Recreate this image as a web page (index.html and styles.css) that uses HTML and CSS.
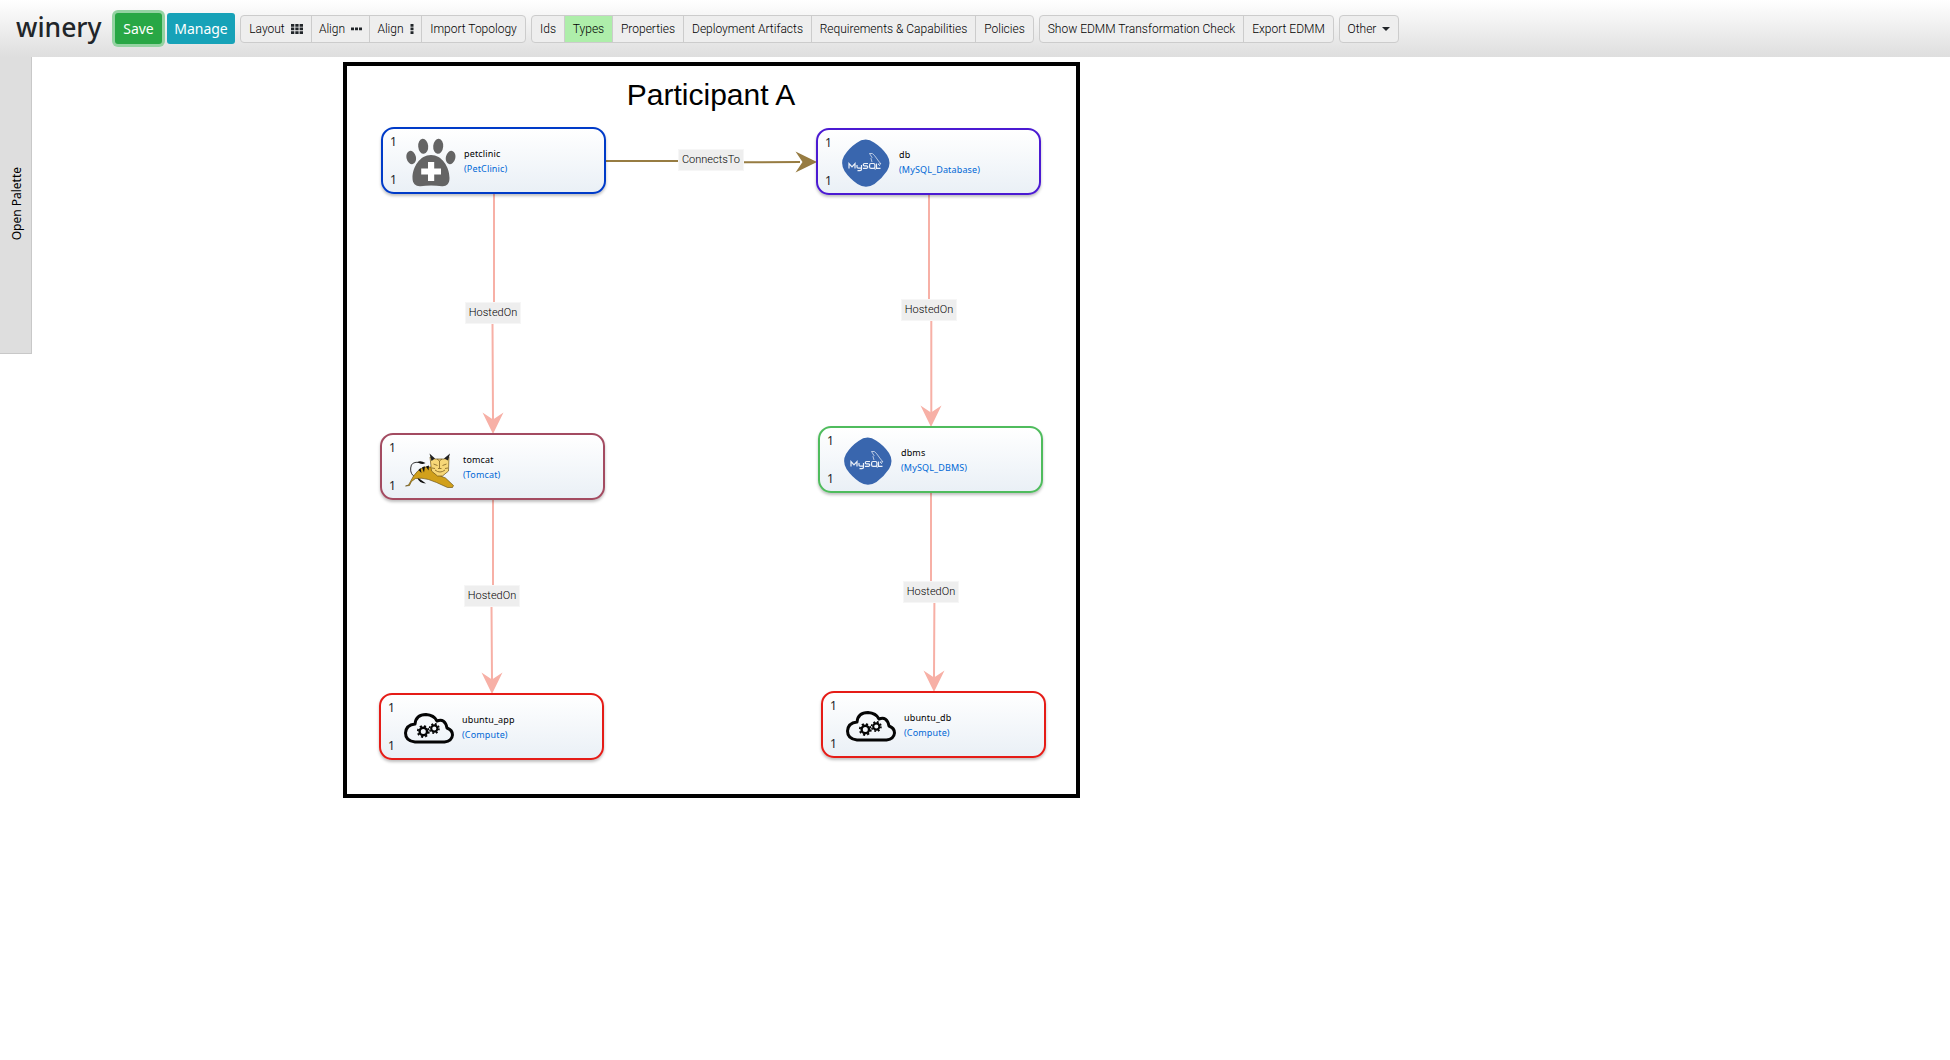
FILE: index.html
```html
<!DOCTYPE html>
<html lang="en">
<head>
<meta charset="utf-8">
<title>winery</title>
<link rel="stylesheet" href="styles.css">
</head>
<body>
<svg class="defs" width="0" height="0">
  <defs>
    <symbol id="paw" viewBox="0 0 50 50">
      <g fill="#646464">
        <ellipse cx="5.200" cy="20.500" rx="4.700" ry="6.800" transform="rotate(-14 5.2 20.5)"/>
        <ellipse cx="17.200" cy="9.300" rx="5" ry="7.500" transform="rotate(-5 17.2 9.3)"/>
        <ellipse cx="32.200" cy="9.300" rx="5" ry="7.500" transform="rotate(5 32.2 9.3)"/>
        <ellipse cx="44.600" cy="20.500" rx="4.700" ry="6.800" transform="rotate(14 44.6 20.5)"/>
        <path d="M25 18C36 18 43.500 30 43.500 41C43.500 47 40.500 49.500 36 49.200C29 48.200 21 48.200 14.500 49.200C10 49.500 6.500 47 6.500 41C6.500 30 14 18 25 18Z"/>
      </g>
      <path fill="#fff" d="M22 25h6.200v6.500H35v6h-6.800V44H22v-6.500h-6.800v-6H22z"/>
    </symbol>
    <symbol id="mysql" viewBox="0 0 50 50">
      <path fill="#3966ae" d="M15.500 5Q24.500-1.500 33 4.500Q41 9.500 46 17Q51 25 46 33Q41 40.500 33.500 46Q25 51.500 16.500 46Q8.500 40.500 3.500 33Q-1 25.500 3 18Q8 10 15.500 5Z"/>
      <g fill="none" stroke="#eef2f9" stroke-width="1.200">
        <path d="M8 30.500v-5l3 3.400L14 25.500v5M16 27v2q0 1.200 1.300 1.200H20M20.500 27v4.300q0 1.300-1.500 1.300h-2.500M27 25.500h-3.500q-1.200 0-1.200 1.200t1.200 1.200h2q1.300 0 1.300 1.200t-1.300 1.300H22M30 25.500h2.500q1.400 0 1.400 1.400v2q0 1.400-1.400 1.400H30q-1.400 0-1.400-1.400v-2q0-1.400 1.400-1.400M33 29.500l1.500 2M35.500 25.500v4.900h4"/>
        <path stroke-width=".7" d="M31 24l-1-3.500 1-1-2.500-4q3-1 5 2l4 5.500 2.500 3h-3l2 2"/>
      </g>
    </symbol>
    <symbol id="tomcat" viewBox="0 0 50 36">
      <path d="M15 9.500Q6 8 5.700 15Q5 21 10 24" fill="none" stroke="#333" stroke-width="1"/>
      <path d="M12.500 9q3-2 8 1-4 2.500-8-1M12 24l9 6.500q-7 0-9-6.500" fill="#111"/>
      <path fill="#d1a01b" stroke="#5b450c" stroke-width=".6" d="M.5 33l3-1 5-9q4-6 10-9h9l8 9 5 2 8 7.500-1 2h-5l-11-5-8-3q-7-2-13-1l-4 3-2 4z"/>
      <path fill="#111" d="M17 14.500l2 5 1-6zM21 13.500l2.500 4 .5-5zM13.500 17l3 3-1-5z"/>
      <path fill="#f7d777" stroke="#6b5217" stroke-width=".7" d="M25 4l5 2h9l5-2-.5 14-6 5h-5l-6-5z"/>
      <path fill="#222" d="M24.500.5l5.500 5-3.500 2.500zM45 .5L39 5.500l4 2z"/>
      <path d="M28.500 11l4 1.500M41.500 11l-4 1.500M34.500 8v7M33 15.500h3.500M30 17q5 4 10 0M27 15l3 .5M43 15l-3 .5M32 6l2.500 2 2.500-2" fill="none" stroke="#7c5f23" stroke-width=".8"/>
    </symbol>
    <symbol id="cloud" viewBox="0 0 50 31">
      <path fill="none" stroke="#050505" stroke-width="3" stroke-linejoin="round" d="M11 29Q1.500 28 1.500 20Q2 12 11 11Q12 1.500 22 1.500Q30 2 33 8Q41 5 43 15Q48.500 17 48.500 22Q48 28 40.500 29Z"/>
      <g fill="none" stroke="#050505">
        <circle cx="19.300" cy="18.500" r="3.700" stroke-width="2.400"/>
        <circle cx="19.300" cy="18.500" r="5.500" stroke-width="1.800" stroke-dasharray="2.160"/>
        <circle cx="30.300" cy="15.500" r="3.100" stroke-width="2.100"/>
        <circle cx="30.300" cy="15.500" r="4.700" stroke-width="1.600" stroke-dasharray="1.850"/>
      </g>
    </symbol>
  </defs>
</svg>

<header class="toolbar">
  <span class="brand">winery</span>
  <button class="btn save">Save</button>
  <button class="btn manage">Manage</button>
  <div class="group actions">
    <button class="w71">Layout
      <svg width="12" height="10" viewBox="0 0 12 10"><path fill="#212529" d="M0 0h3.300v2.700H0zM4.300 0h3.300v2.700H4.300zM8.600 0H12v2.700H8.600zM0 3.600h3.300v2.700H0zM4.300 3.600h3.300v2.700H4.300zM8.600 3.600H12v2.700H8.600zM0 7.200h3.300v2.700H0zM4.300 7.200h3.300v2.700H4.300zM8.600 7.200H12v2.700H8.600z"/></svg>
    </button>
    <button class="w58">Align
      <svg width="11" height="10" viewBox="0 0 11 10"><path fill="#212529" d="M0 3.500h3v2.800H0zM4 3.500h3v2.800H4zM8 3.500h3v2.800H8z"/></svg>
    </button>
    <button class="w52">Align
      <svg width="4" height="10" viewBox="0 0 4 10"><path fill="#212529" d="M.5 0h3v2.700h-3zM.5 3.600h3v2.700h-3zM.5 7.200h3v2.700h-3z"/></svg>
    </button>
    <button class="w103">Import Topology</button>
  </div>
  <div class="group views">
    <button class="w33">Ids</button>
    <button class="w48 active">Types</button>
    <button class="w71">Properties</button>
    <button class="w128">Deployment Artifacts</button>
    <button class="w164">Requirements &amp; Capabilities</button>
    <button class="w57">Policies</button>
  </div>
  <div class="group edmm">
    <button class="w204">Show EDMM Transformation Check</button>
    <button class="w89">Export EDMM</button>
  </div>
  <div class="group other">
    <button class="w58">Other <span class="caret"></span></button>
  </div>
</header>

<main class="workspace">
  <aside class="palette"><span>Open Palette</span></aside>
  <div class="canvas">
    <section class="participant"><h1>Participant A</h1></section>
    <svg class="links" width="1950" height="1003" viewBox="0 57 1950 1003">
      <g fill="none" stroke="#f7b0a6" stroke-width="2">
        <path d="M494 194V303M492.500 323L493 420M493 500V586M491.500 605L492 680M929 195V300M931.300 320V414M931 493V582M934.400 602L934 678"/>
      </g>
      <path d="M606 161H680M742 162.300L800 162" stroke="#977c42" stroke-width="2"/>
      <path fill="#977c42" d="M817 162l-21.500-10.500 7 10.500-7 10.500z"/>
      <g fill="#f7b0a6">
        <path d="M493 434l-10.500-21.500 10.500 7 10.500-7z"/>
        <path d="M931 427l-10.500-21.500 10.500 7 10.500-7z"/>
        <path d="M492 694l-10.500-21.500 10.500 7 10.500-7z"/>
        <path d="M934 692l-10.500-21.500 10.500 7 10.500-7z"/>
      </g>
    </svg>
    <span class="link-label connects">ConnectsTo</span>
    <span class="link-label host-a1">HostedOn</span>
    <span class="link-label host-b1">HostedOn</span>
    <span class="link-label host-a2">HostedOn</span>
    <span class="link-label host-b2">HostedOn</span>

    <article class="node petclinic">
      <div class="counts"><span>1</span><span>1</span></div>
      <svg class="logo" width="50" height="50"><use href="#paw"/></svg>
      <div class="names"><span>petclinic</span><span class="type">(PetClinic)</span></div>
    </article>
    <article class="node db">
      <div class="counts"><span>1</span><span>1</span></div>
      <svg class="logo" width="50" height="50"><use href="#mysql"/></svg>
      <div class="names"><span>db</span><span class="type">(MySQL_Database)</span></div>
    </article>
    <article class="node tomcat">
      <div class="counts"><span>1</span><span>1</span></div>
      <svg class="logo cat" width="50" height="36"><use href="#tomcat"/></svg>
      <div class="names"><span>tomcat</span><span class="type">(Tomcat)</span></div>
    </article>
    <article class="node dbms">
      <div class="counts"><span>1</span><span>1</span></div>
      <svg class="logo" width="50" height="50"><use href="#mysql"/></svg>
      <div class="names"><span>dbms</span><span class="type">(MySQL_DBMS)</span></div>
    </article>
    <article class="node ubuntu-app">
      <div class="counts"><span>1</span><span>1</span></div>
      <svg class="logo" width="50" height="31"><use href="#cloud"/></svg>
      <div class="names"><span>ubuntu_app</span><span class="type">(Compute)</span></div>
    </article>
    <article class="node ubuntu-db">
      <div class="counts"><span>1</span><span>1</span></div>
      <svg class="logo" width="50" height="31"><use href="#cloud"/></svg>
      <div class="names"><span>ubuntu_db</span><span class="type">(Compute)</span></div>
    </article>
  </div>
</main>
</body>
</html>
```
FILE: styles.css
```css
* { box-sizing: border-box; }
body {
  margin: 0;
  height: 1060px;
  overflow: hidden;
  background: #fff;
  color: #212529;
  font-family: "Noto Sans", sans-serif;
}
.defs { position: absolute; }
button { font-family: inherit; color: inherit; margin: 0; }

.toolbar {
  height: 57px;
  display: flex;
  align-items: center;
  padding: 0 0 0 16px;
  background: linear-gradient(#fff, #dedede);
}
.brand { width: 99px; font-size: 26.500px; line-height: 30px; font-weight: 500; padding-bottom: 4px; }
.btn { height: 31px; border: 0; border-radius: 3px; padding: 0; color: #fff; font-size: 14px; }
.save { width: 47px; background: #28a745; box-shadow: 0 0 0 3px #94d3a2; }
.manage { width: 68px; margin-left: 5px; background: #17a2b8; }
.group {
  display: flex;
  height: 28px;
  margin: 1px 0 0 5px;
  border: 1px solid #ccc;
  border-radius: 4px;
  background: #eee;
  overflow: hidden;
  font-family: Roboto, sans-serif;
}
.group button {
  display: flex;
  align-items: center;
  justify-content: center;
  gap: 6px;
  flex: none;
  padding: 0;
  border: 0;
  border-right: 1px solid #ccc;
  background: none;
  color: #000;
  font-size: 12px;
  font-weight: 300;
  white-space: nowrap;
}
.group button:last-child { border-right: 0; }
.group .active { background: #aeeeaa; }
.w33 { width: 33px; }
.w48 { width: 48px; }
.w52 { width: 52px; }
.w57 { width: 57px; }
.w58 { width: 58px; }
.w71 { width: 71px; }
.w89 { width: 89px; }
.w103 { width: 103px; }
.w128 { width: 128px; }
.w164 { width: 164px; }
.w204 { width: 204px; }
.caret { border: 4px solid transparent; border-top-color: #212529; border-bottom: 0; }

.workspace { position: relative; height: 1003px; }
.palette {
  width: 32px;
  height: 297px;
  display: flex;
  align-items: center;
  justify-content: center;
  padding: 0 0 2px 2px;
  background: #dedede;
  border-right: 1px solid #c8c8c8;
  border-bottom: 1px solid #c8c8c8;
  color: #000;
  font-size: 12px;
}
.palette span { writing-mode: vertical-rl; transform: rotate(180deg); }
.canvas { position: absolute; inset: 0; pointer-events: none; }
.participant {
  position: absolute;
  left: 343px;
  top: 5px;
  width: 737px;
  height: 736px;
  border: 4px solid #000;
}
.participant h1 {
  margin: 11px 1px 0 0;
  text-align: center;
  color: #000;
  font: 400 30px/36px "Liberation Sans", Arial, sans-serif;
}
.links { position: absolute; left: 0; top: 0; }
.link-label {
  position: absolute;
  height: 22px;
  width: 56px;
  border: 1px solid #f6f6f6;
  background: #eee;
  color: #000;
  text-align: center;
  font: 300 11px/20px Roboto, sans-serif;
}
.connects { left: 678px; top: 92px; width: 66px; }
.host-a1 { left: 465px; top: 245px; }
.host-b1 { left: 901px; top: 242px; }
.host-a2 { left: 464px; top: 528px; }
.host-b2 { left: 903px; top: 524px; }

.node {
  position: absolute;
  width: 225px;
  height: 67px;
  display: flex;
  align-items: center;
  padding-left: 7px;
  border: 2px solid;
  border-radius: 13px;
  background: linear-gradient(#fff, #eaf0f6);
  box-shadow: 0 2px 3px rgba(0, 0, 0, .25);
}
.petclinic { left: 381px; top: 70px; border-color: #003bc8; }
.db { left: 816px; top: 71px; border-color: #4b1ad2; }
.tomcat { left: 380px; top: 376px; border-color: #a34b61; }
.dbms { left: 818px; top: 369px; border-color: #4fbc5d; }
.ubuntu-app { left: 379px; top: 636px; border-color: #e51c17; }
.ubuntu-db { left: 821px; top: 634px; border-color: #e51c17; }
.counts {
  width: 16px;
  height: 54px;
  display: flex;
  flex-direction: column;
  justify-content: space-between;
  font-size: 12px;
  line-height: 16px;
}
.logo { flex: none; margin-top: 3px; }
.cat { margin-top: 8px; }
.names {
  display: flex;
  flex-direction: column;
  margin: 0 0 0 8px;
  color: #000;
  font-size: 9px;
  line-height: 15px;
  letter-spacing: .15px;
}
.type { color: #0068d6; }
```
